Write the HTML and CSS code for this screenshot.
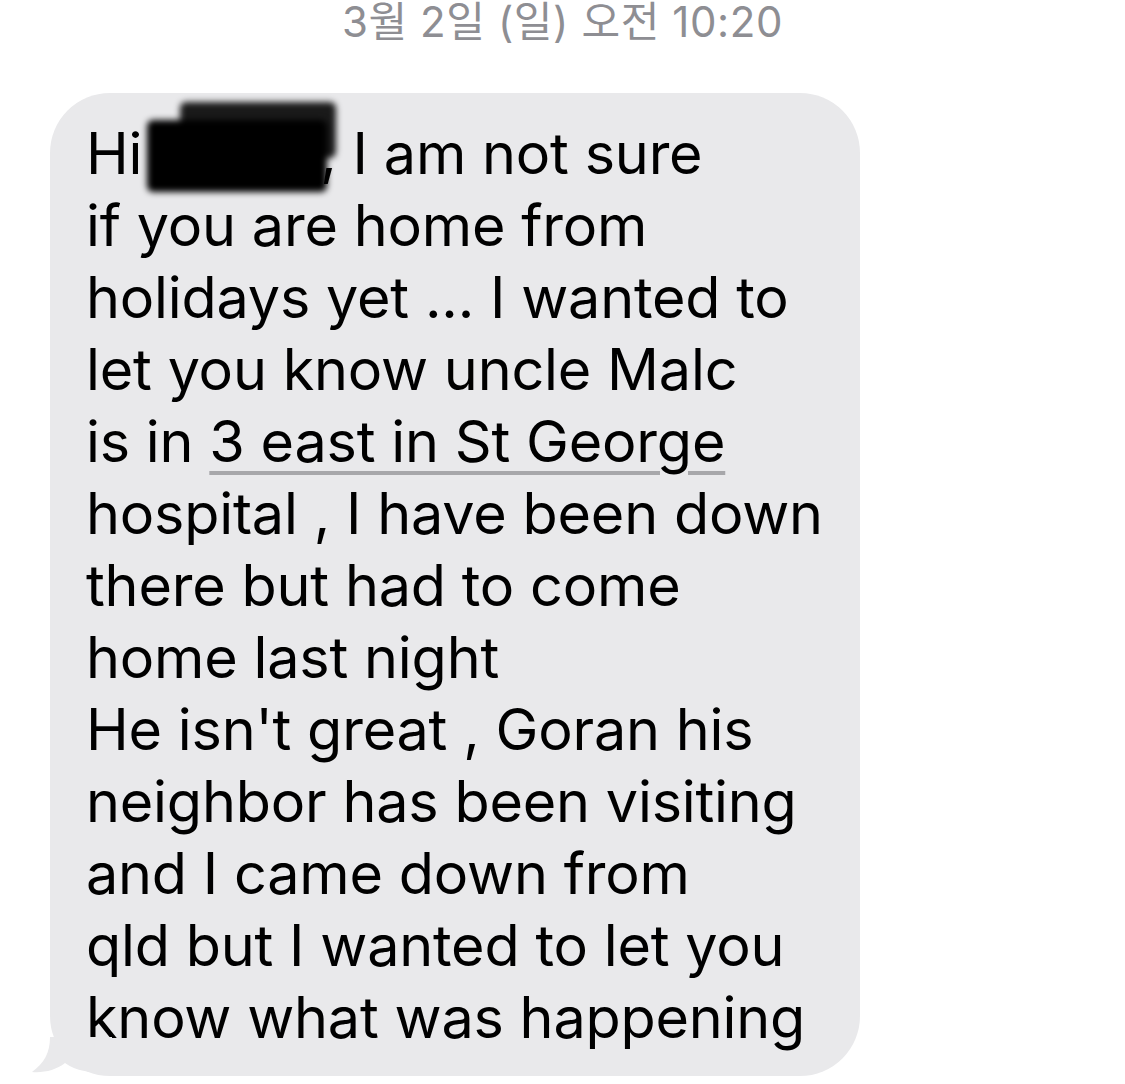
FILE: index.html
```html
<!DOCTYPE html>
<html lang="en">
<head>
<meta charset="utf-8">
<link rel="stylesheet" href="styles.css">
</head>
<body>
<div class="screen">
  <div class="stamp">3월 2일 (일) 오전 10:20</div>
  <div class="row">
    <div class="bubble">
      <p class="msg">Hi<span class="redact"><span class="blot blot-a"></span><span class="blot blot-b"></span></span>, I am not sure<br>if you are home from<br>holidays yet ... I wanted to<br>let you know uncle Malc<br>is in <span class="link">3 east in St George</span><br>hospital , I have been down<br>there but had to come<br>home last night<br>He isn't great , Goran his<br>neighbor has been visiting<br>and I came down from<br>qld but I wanted to let you<br>know what was happening</p>
      <svg class="tail" width="80" height="40" viewBox="0 0 80 40" aria-hidden="true">
        <path d="M18 0 C18 16 12 26 0 35 C12 36 24 33 33 26 C44 34 58 36 80 36 L80 0 Z" fill="#e9e9eb"/>
      </svg>
    </div>
  </div>
</div>
</body>
</html>
```

FILE: styles.css
```css
html, body {
  margin: 0;
  padding: 0;
  background: #ffffff;
}
.screen {
  width: 1125px;
  height: 1084px;
  overflow: hidden;
  font-family: Inter, "Noto Sans", "Noto Sans CJK KR", sans-serif;
}
.stamp {
  padding-top: 2px;
  height: 42px;
  line-height: 40px;
  font-size: 42px;
  color: #8e8e93;
  text-align: center;
  letter-spacing: 0.6px;
  font-family: Inter, "Noto Sans CJK KR", sans-serif;
}
.row {
  padding-top: 49px;
  padding-left: 50px;
}
.bubble {
  position: relative;
  width: 810px;
  box-sizing: border-box;
  background: #e9e9eb;
  border-radius: 60px;
  padding: 24px 0 23px 36px;
}
.msg {
  margin: 0;
  font-size: 57.5px;
  line-height: 72px;
  color: #000;
  white-space: nowrap;
  letter-spacing: -0.2px;
}
.redact {
  position: relative;
  display: inline-block;
  width: 178px;
  height: 10px;
}
.blot {
  position: absolute;
  background: #000;
  filter: blur(3px);
  border-radius: 6px;
}
.blot-a {
  left: 38px;
  top: -62px;
  width: 156px;
  height: 56px;
  background: #1a1a1a;
}
.blot-b {
  left: 5px;
  top: -44px;
  width: 180px;
  height: 72px;
}
.link {
  text-decoration: underline;
  text-decoration-color: #a7a7aa;
  text-decoration-thickness: 4px;
  text-underline-offset: 9px;
  text-decoration-skip-ink: auto;
}
.tail {
  position: absolute;
  left: -18px;
  bottom: -1px;
  display: block;
}
```
